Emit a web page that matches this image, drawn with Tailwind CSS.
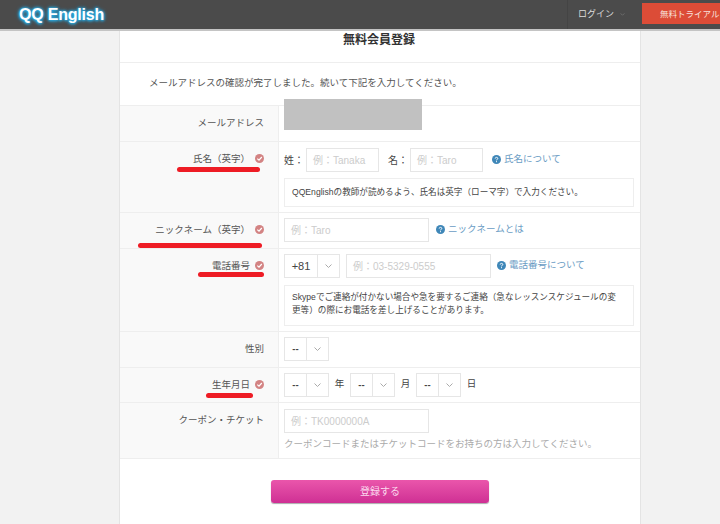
<!DOCTYPE html>
<html lang="ja">
<head>
    <meta charset="UTF-8" />
    <title>無料会員登録</title>
    <script src="https://cdn.jsdelivr.net/npm/@tailwindcss/browser@4"></script>
</head>
<body class="relative h-[524px] w-[720px] overflow-hidden bg-[#f2f2f2] text-[#555] font-['Liberation_Sans','Noto_Sans_CJK_JP',sans-serif]">

<!-- header -->
<header class="flex h-[31px] items-start border-b-2 border-[#c4c4c4] bg-[#4b4b4b]">
    <div class="ml-[19px] mt-[5px] text-[16px] font-bold leading-[20px] tracking-[-0.2px] text-white [text-shadow:0_0_2px_#29a9e0,0_0_3px_#29a9e0,0_0_4px_#29a9e0,0_1px_3px_#29a9e0]">QQ English</div>
    <div class="ml-auto flex h-[29px] w-[75px] items-center gap-[6px] border-l border-[#444] pl-[10px] text-[9px] text-[#ddd]">
        ログイン
        <svg width="5" height="3" viewBox="0 0 6 4" fill="none" stroke="#777" stroke-width="1"><path d="M0.5 0.5 3 3 5.5 0.5" /></svg>
    </div>
    <div class="mt-[3px] flex h-[21px] w-[78px] items-center overflow-hidden whitespace-nowrap bg-[#dc4c37] pl-[18px] pt-[1px] text-[8.5px] text-[#f8e0dc]">無料トライアル</div>
</header>

<!-- card -->
<main class="ml-[119px] w-[522px] border-x border-[#e4e4e4] bg-white text-[9.5px]">
    <h1 class="h-[32px] border-b border-[#eee] pl-[223px] text-[12px] font-bold leading-[18px] text-[#333]">無料会員登録</h1>
    <p class="h-[43px] border-b border-[#eee] pl-[29px] pt-[12px] leading-[16px] text-[#555]">メールアドレスの確認が完了しました。続いて下記を入力してください。</p>

    <!-- email -->
    <div class="flex h-[36px] border-b border-[#eee]">
        <div class="flex w-[159px] justify-end border-r border-[#eee] bg-[#f9f9f9] pr-[14px] pt-[9px] leading-[16px]">メールアドレス</div>
        <div class="flex-1"></div>
    </div>

    <!-- name -->
    <div class="flex h-[71px] border-b border-[#eee]">
        <div class="flex w-[159px] items-start justify-end gap-[5px] border-r border-[#eee] bg-[#f9f9f9] pr-[14px] pt-[9px] leading-[16px]">氏名（英字）<svg class="mt-[3px]" width="9" height="9" viewBox="0 0 9 9"><circle cx="4.5" cy="4.5" r="4.5" fill="#d38383" /><path d="M2.3 4.6 4 6.2 6.8 3" fill="none" stroke="#fff" stroke-width="1.2" /></svg></div>
        <div class="flex-1 pl-[5px] pt-[6px]">
            <div class="flex h-[24px] items-center text-[#444]">
                <span class="w-[22px] text-[10px]">姓：</span>
                <div class="flex h-[24px] w-[73px] items-center border border-[#e6e6e6] pl-[6px] text-[10px] text-[#ccc]">例：Tanaka</div>
                <span class="ml-[9px] w-[22px] text-[10px]">名：</span>
                <div class="flex h-[24px] w-[73px] items-center border border-[#e6e6e6] pl-[6px] text-[10px] text-[#ccc]">例：Taro</div>
                <span class="mb-[2px] ml-[9px] flex items-center gap-[3px] text-[#6a9cc4]"><svg width="9" height="9" viewBox="0 0 9 9"><circle cx="4.5" cy="4.5" r="4.5" fill="#3f87b8" /><path d="M3.2 3.5C3.2 2 5.8 2 5.8 3.4 5.8 4.4 4.5 4.3 4.5 5.4M4.5 6.2V7.2" fill="none" stroke="#fff" stroke-width="1" /></svg>氏名について</span>
            </div>
            <div class="mt-[6px] h-[29px] w-[350px] border border-[#eee] pl-[7px] pt-[6px] text-[8.6px] leading-[14px] text-[#444]">QQEnglishの教師が読めるよう、氏名は英字（ローマ字）で入力ください。</div>
        </div>
    </div>

    <!-- nickname -->
    <div class="flex h-[36px] border-b border-[#eee]">
        <div class="flex w-[159px] items-start justify-end gap-[5px] border-r border-[#eee] bg-[#f9f9f9] pr-[14px] pt-[9px] leading-[16px]">ニックネーム（英字）<svg class="mt-[3px]" width="9" height="9" viewBox="0 0 9 9"><circle cx="4.5" cy="4.5" r="4.5" fill="#d38383" /><path d="M2.3 4.6 4 6.2 6.8 3" fill="none" stroke="#fff" stroke-width="1.2" /></svg></div>
        <div class="flex flex-1 items-start pl-[5px] pt-[5px]">
            <div class="flex h-[24px] w-[145px] items-center border border-[#e6e6e6] pl-[6px] text-[10px] text-[#ccc]">例：Taro</div>
            <span class="ml-[7px] flex h-[23px] items-center gap-[3px] text-[#6a9cc4]"><svg width="9" height="9" viewBox="0 0 9 9"><circle cx="4.5" cy="4.5" r="4.5" fill="#3f87b8" /><path d="M3.2 3.5C3.2 2 5.8 2 5.8 3.4 5.8 4.4 4.5 4.3 4.5 5.4M4.5 6.2V7.2" fill="none" stroke="#fff" stroke-width="1" /></svg>ニックネームとは</span>
        </div>
    </div>

    <!-- phone -->
    <div class="flex h-[83px] border-b border-[#eee]">
        <div class="flex w-[159px] items-start justify-end gap-[5px] border-r border-[#eee] bg-[#f9f9f9] pr-[14px] pt-[9px] leading-[16px]">電話番号<svg class="mt-[3px]" width="9" height="9" viewBox="0 0 9 9"><circle cx="4.5" cy="4.5" r="4.5" fill="#d38383" /><path d="M2.3 4.6 4 6.2 6.8 3" fill="none" stroke="#fff" stroke-width="1.2" /></svg></div>
        <div class="flex-1 pl-[5px] pt-[5px]">
            <div class="flex h-[24px] items-center">
                <div class="flex h-[24px] w-[56px] border border-[#e6e6e6] text-[11px] text-[#444]">
                    <span class="flex w-[33px] items-center justify-center border-r border-[#e6e6e6]">+81</span>
                    <span class="flex flex-1 items-center justify-center"><svg width="7" height="4" viewBox="0 0 7 4" fill="none" stroke="#aaa"><path d="M0.5 0.5 3.5 3.5 6.5 0.5" /></svg></span>
                </div>
                <div class="ml-[6px] flex h-[24px] w-[145px] items-center border border-[#e6e6e6] pl-[6px] text-[10px] text-[#ccc]">例：03-5329-0555</div>
                <span class="mb-[2px] ml-[6px] flex items-center gap-[3px] text-[#6a9cc4]"><svg width="9" height="9" viewBox="0 0 9 9"><circle cx="4.5" cy="4.5" r="4.5" fill="#3f87b8" /><path d="M3.2 3.5C3.2 2 5.8 2 5.8 3.4 5.8 4.4 4.5 4.3 4.5 5.4M4.5 6.2V7.2" fill="none" stroke="#fff" stroke-width="1" /></svg>電話番号について</span>
            </div>
            <div class="mt-[7px] h-[41px] w-[350px] border border-[#eee] pl-[7px] pr-[10px] pt-[5px] text-[8.6px] leading-[13px] text-[#444]">Skypeでご連絡が付かない場合や急を要するご連絡（急なレッスンスケジュールの変更等）の際にお電話を差し上げることがあります。</div>
        </div>
    </div>

    <!-- gender -->
    <div class="flex h-[36px] border-b border-[#eee]">
        <div class="flex w-[159px] justify-end border-r border-[#eee] bg-[#f9f9f9] pr-[14px] pt-[9px] leading-[16px]">性別</div>
        <div class="flex-1 pl-[5px] pt-[5px]">
            <div class="flex h-[24px] w-[45px] border border-[#e6e6e6] text-[#444]">
                <span class="flex w-[22px] items-center justify-center border-r border-[#e6e6e6] font-bold">--</span>
                <span class="flex flex-1 items-center justify-center"><svg width="7" height="4" viewBox="0 0 7 4" fill="none" stroke="#aaa"><path d="M0.5 0.5 3.5 3.5 6.5 0.5" /></svg></span>
            </div>
        </div>
    </div>

    <!-- birthday -->
    <div class="flex h-[35px] border-b border-[#eee]">
        <div class="flex w-[159px] items-start justify-end gap-[5px] border-r border-[#eee] bg-[#f9f9f9] pr-[14px] pt-[9px] leading-[16px]">生年月日<svg class="mt-[3px]" width="9" height="9" viewBox="0 0 9 9"><circle cx="4.5" cy="4.5" r="4.5" fill="#d38383" /><path d="M2.3 4.6 4 6.2 6.8 3" fill="none" stroke="#fff" stroke-width="1.2" /></svg></div>
        <div class="flex flex-1 items-start pl-[5px] pt-[5px] text-[#444]">
            <div class="flex h-[24px] w-[45px] border border-[#e6e6e6]">
                <span class="flex w-[22px] items-center justify-center border-r border-[#e6e6e6] font-bold">--</span>
                <span class="flex flex-1 items-center justify-center"><svg width="7" height="4" viewBox="0 0 7 4" fill="none" stroke="#aaa"><path d="M0.5 0.5 3.5 3.5 6.5 0.5" /></svg></span>
            </div>
            <span class="flex h-[22px] w-[21px] items-center justify-center">年</span>
            <div class="flex h-[24px] w-[45px] border border-[#e6e6e6]">
                <span class="flex w-[22px] items-center justify-center border-r border-[#e6e6e6] font-bold">--</span>
                <span class="flex flex-1 items-center justify-center"><svg width="7" height="4" viewBox="0 0 7 4" fill="none" stroke="#aaa"><path d="M0.5 0.5 3.5 3.5 6.5 0.5" /></svg></span>
            </div>
            <span class="flex h-[22px] w-[21px] items-center justify-center">月</span>
            <div class="flex h-[24px] w-[45px] border border-[#e6e6e6]">
                <span class="flex w-[22px] items-center justify-center border-r border-[#e6e6e6] font-bold">--</span>
                <span class="flex flex-1 items-center justify-center"><svg width="7" height="4" viewBox="0 0 7 4" fill="none" stroke="#aaa"><path d="M0.5 0.5 3.5 3.5 6.5 0.5" /></svg></span>
            </div>
            <span class="flex h-[22px] w-[21px] items-center justify-center">日</span>
        </div>
    </div>

    <!-- coupon -->
    <div class="flex h-[56px] border-b border-[#eee]">
        <div class="flex w-[159px] justify-end border-r border-[#eee] bg-[#f9f9f9] pr-[14px] pt-[9px] leading-[16px]">クーポン・チケット</div>
        <div class="flex-1 pl-[5px] pt-[6px]">
            <div class="flex h-[24px] w-[145px] items-center border border-[#e6e6e6] pl-[6px] text-[10px] text-[#ccc]">例：TK0000000A</div>
            <p class="mt-[3px] leading-[16px] text-[#aaa]">クーポンコードまたはチケットコードをお持ちの方は入力してください。</p>
        </div>
    </div>

    <!-- submit -->
    <div class="flex h-[66px] justify-center pt-[21px]">
        <button class="h-[23px] w-[218px] rounded-[3px] bg-gradient-to-b from-[#ea55ab] to-[#cf2f94] text-[10px] text-[#fbd9ee] shadow-[0_1px_1px_#aaa]">登録する</button>
    </div>
</main>

<!-- masked address -->
<div class="absolute left-[284px] top-[99px] h-[31px] w-[138px] bg-[#c1c1c1]"></div>

<!-- red marker underlines -->
<div class="absolute left-[177px] top-[167px] h-[5px] w-[83px] rounded-full bg-[#ee1c25]"></div>
<div class="absolute left-[138px] top-[243px] h-[5px] w-[124px] rounded-full bg-[#ee1c25]"></div>
<div class="absolute left-[198px] top-[272px] h-[5px] w-[66px] rounded-full bg-[#ee1c25]"></div>
<div class="absolute left-[206px] top-[393px] h-[5px] w-[47px] rounded-full bg-[#ee1c25]"></div>

</body>
</html>
